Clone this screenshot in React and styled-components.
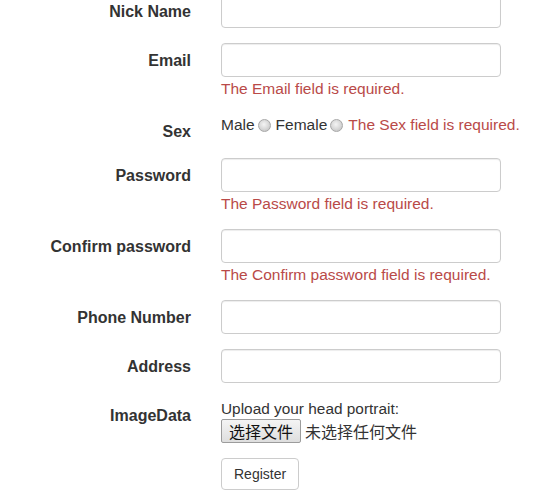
import React from "react";
import styled, { createGlobalStyle } from "styled-components";

const Global = createGlobalStyle`
  html, body { margin: 0; padding: 0; background: #fff; }
  body {
    font-family: "Liberation Sans", Arial, "Noto Sans CJK SC", sans-serif;
    color: #333;
    overflow: hidden;
  }
`;

const Form = styled.form`
  margin-top: -6px;
  display: flex;
  flex-direction: column;
  gap: 15px;
`;

const Row = styled.div`
  display: grid;
  grid-template-columns: 191px 1fr;
  column-gap: 30px;
  min-height: ${(p) => p.$min || 0}px;
`;

const Label = styled.label`
  text-align: right;
  font-weight: bold;
  font-size: 16px;
  line-height: 20px;
  padding-top: 8px;
  color: #333;
  white-space: nowrap;
`;

const Field = styled.div`
  display: flex;
  flex-direction: column;
  align-items: flex-start;
`;

const Input = styled.input`
  box-sizing: border-box;
  width: 280px;
  height: 34px;
  border: 1px solid #ccc;
  border-radius: 4px;
  box-shadow: inset 0 1px 1px rgba(0, 0, 0, 0.075);
  padding: 6px 12px;
  font-size: 14px;
  font-family: inherit;
  background: #fff;
  margin: 0;
`;

const Error = styled.span`
  color: #b94a48;
  font-size: 15.5px;
  line-height: 21px;
  margin-top: 1px;
  white-space: nowrap;
`;

const InlineLine = styled.div`
  display: flex;
  align-items: center;
  font-size: 15.5px;
  line-height: 20px;
  padding-top: 1px;
  white-space: nowrap;
`;

const Radio = styled.span`
  display: inline-block;
  box-sizing: border-box;
  width: 13px;
  height: 13px;
  border-radius: 50%;
  border: 1px solid #a8a8a8;
  background: radial-gradient(circle at 45% 40%, #f4f4f4 0%, #dcdcdc 45%, #bababa 100%);
  margin: 0 5px 0 3px;
`;

const ErrInline = styled.span`
  color: #b94a48;
  margin-left: 0;
`;

const Text = styled.div`
  font-size: 15.4px;
  line-height: 20px;
  padding-top: 1px;
  white-space: nowrap;
`;

const FileLine = styled.div`
  display: flex;
  align-items: center;
  gap: 4px;
  font-family: "Noto Sans CJK SC", sans-serif;
  font-size: 16px;
`;

const FileButton = styled.span`
  box-sizing: border-box;
  width: 80px;
  height: 24px;
  display: flex;
  align-items: center;
  justify-content: center;
  border: 1px solid #9c9c9c;
  border-radius: 2px;
  background: linear-gradient(#f4f4f4, #dedede);
  font-size: 16px;
  line-height: 22px;
  color: #111;
`;

const Button = styled.button`
  box-sizing: border-box;
  height: 32px;
  padding: 5px 12px;
  border: 1px solid #ccc;
  border-radius: 4px;
  background: #fff;
  font-family: "Liberation Sans", Arial, sans-serif;
  font-size: 14px;
  line-height: 20px;
  color: #333;
`;

const Empty = styled.div``;

const TextRow = ({ label, error, type = "text" }) => (
  <Row>
    <Label>{label}</Label>
    <Field>
      <Input type={type} />
      {error && <Error>{error}</Error>}
    </Field>
  </Row>
);

export default function App() {
  return (
    <>
      <Global />
      <Form onSubmit={(e) => e.preventDefault()}>
        <TextRow label="Nick Name" />
        <TextRow label="Email" error="The Email field is required." />
        <Row $min={29}>
          <Label>Sex</Label>
          <Field>
            <InlineLine>
              Male<Radio />Female<Radio />
              <ErrInline>The Sex field is required.</ErrInline>
            </InlineLine>
          </Field>
        </Row>
        <TextRow label="Password" type="password" error="The Password field is required." />
        <TextRow
          label="Confirm password"
          type="password"
          error="The Confirm password field is required."
        />
        <TextRow label="Phone Number" />
        <TextRow label="Address" />
        <Row>
          <Label>ImageData</Label>
          <Field>
            <Text>Upload your head portrait:</Text>
            <FileLine>
              <FileButton>选择文件</FileButton>
              <span>未选择任何文件</span>
            </FileLine>
          </Field>
        </Row>
        <Row>
          <Empty />
          <Field>
            <Button type="submit">Register</Button>
          </Field>
        </Row>
      </Form>
    </>
  );
}
